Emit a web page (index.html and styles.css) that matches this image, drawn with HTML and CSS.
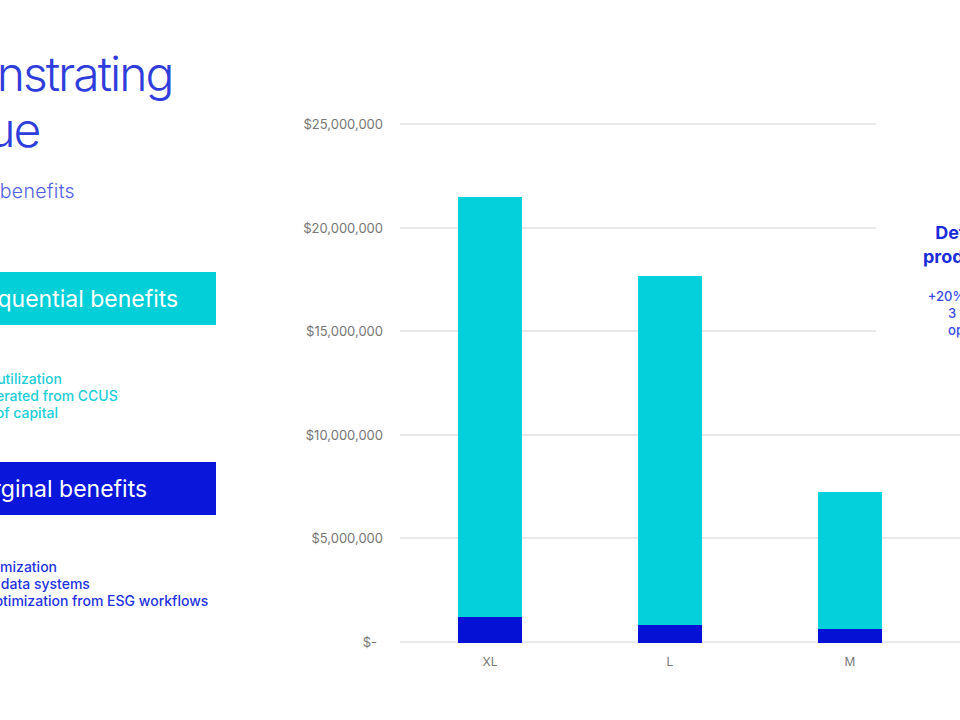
FILE: index.html
```html
<!DOCTYPE html>
<html lang="en">
<head>
<meta charset="utf-8">
<title>Demonstrating revenue</title>
<link rel="stylesheet" href="styles.css">
</head>
<body>
<div class="slide">
  <section class="intro">
    <h1 class="title">Demonstrating<br>revenue</h1>
    <p class="subtitle">Quantifiable benefits</p>
    <div class="box box-cyan">Consequential benefits</div>
    <ul class="list list-cyan">
      <li>Higher asset utilization</li>
      <li>Revenue generated from CCUS</li>
      <li>Reduce cost of capital</li>
    </ul>
    <div class="box box-blue">Marginal benefits</div>
    <ul class="list list-blue">
      <li>Process optimization</li>
      <li>Streamlined data systems</li>
      <li>Reporting optimization from ESG workflows</li>
    </ul>
  </section>

  <section class="chart">
    <div class="yaxis">
      <span>$25,000,000</span>
      <span>$20,000,000</span>
      <span>$15,000,000</span>
      <span>$10,000,000</span>
      <span>$5,000,000</span>
      <span class="zero">$-</span>
    </div>
    <div class="plot-wrap">
      <div class="plot">
        <div class="col">
          <div class="bar">
            <div class="seg seg-cyan" style="height:420px"></div>
            <div class="seg seg-blue" style="height:26px"></div>
          </div>
        </div>
        <div class="col">
          <div class="bar">
            <div class="seg seg-cyan" style="height:349px"></div>
            <div class="seg seg-blue" style="height:18px"></div>
          </div>
        </div>
        <div class="col">
          <div class="bar">
            <div class="seg seg-cyan" style="height:137px"></div>
            <div class="seg seg-blue" style="height:14px"></div>
          </div>
        </div>
        <div class="col"></div>
      </div>
      <div class="xaxis">
        <span>XL</span>
        <span>L</span>
        <span>M</span>
        <span></span>
      </div>
    </div>
  </section>

  <aside class="callout">
    <h2 class="callout-head"><span class="head-line head-first">Deferred</span><span class="head-line">production</span></h2>
    <p class="callout-text">+20% volume<br>3 years<br>optimal</p>
  </aside>
</div>
</body>
</html>
```

FILE: styles.css
```css
html, body {
  margin: 0;
  padding: 0;
  background: #ffffff;
}

body {
  width: 960px;
  height: 720px;
  overflow: hidden;
  font-family: Inter, "Noto Sans", "Liberation Sans", sans-serif;
}

.slide {
  position: relative;
  display: flex;
  width: 960px;
  height: 720px;
  overflow: hidden;
}

/* ---------- left intro column ---------- */
.intro {
  flex: none;
  width: 326px;
  min-width: 0;
  margin-left: -110px;
  padding-top: 46px;
  display: flex;
  flex-direction: column;
}

.title {
  margin: 0 0 0 -18px;
  font-size: 48px;
  line-height: 56px;
  font-weight: 300;
  letter-spacing: -2px;
  color: #2f3edb;
  white-space: nowrap;
}

.subtitle {
  margin: 21px 0 0 -8px;
  font-size: 19.5px;
  line-height: 24px;
  font-weight: 300;
  letter-spacing: 0.3px;
  color: #5261e6;
  white-space: nowrap;
}

.box {
  height: 53px;
  display: flex;
  align-items: center;
  justify-content: center;
  font-size: 23px;
  font-weight: 400;
  color: #ffffff;
  white-space: nowrap;
}

.box-cyan {
  margin-top: 69px;
  background: #02cfd8;
}

.box-blue {
  margin-top: 41px;
  background: #0a16d9;
}

.list {
  margin: 0;
  list-style: none;
  font-size: 14px;
  line-height: 17px;
  font-weight: 500;
  white-space: nowrap;
}

.list-cyan {
  margin-top: 45px;
  padding: 0 0 0 19px;
  color: #22cdd8;
}

.list-blue {
  margin-top: 43px;
  padding: 0 0 0 27px;
  color: #2333e0;
}

/* ---------- chart ---------- */
.chart {
  flex: none;
  display: flex;
  gap: 17px;
  margin-left: 67px;
  padding-top: 123px;
}

.yaxis {
  width: 100px;
  height: 520px;
  display: flex;
  flex-direction: column;
  justify-content: space-between;
  align-items: flex-end;
  font-size: 13px;
  color: #767676;
}

.yaxis span {
  display: block;
  height: 2px;
  line-height: 2px;
  white-space: nowrap;
}

.yaxis .zero {
  padding-right: 6px;
}

.plot {
  width: 720px;
  height: 520px;
  display: grid;
  grid-template-columns: repeat(4, 180px);
  background-image: repeating-linear-gradient(
    to bottom,
    #e9e9e9 0,
    #e9e9e9 2px,
    transparent 2px,
    transparent 103.6px
  );
}

.col {
  display: flex;
  justify-content: center;
  align-items: flex-end;
}

.bar {
  width: 64px;
  display: flex;
  flex-direction: column;
}

.seg-cyan {
  background: #03d0da;
}

.seg-blue {
  background: #0611d6;
}

.xaxis {
  display: grid;
  grid-template-columns: repeat(4, 180px);
  margin-top: 12px;
  font-size: 12px;
  line-height: 14px;
  color: #777777;
  text-align: center;
}

/* ---------- callout over the chart ---------- */
.callout {
  position: absolute;
  left: 876px;
  top: 100px;
  width: 190px;
  height: 320px;
  box-sizing: border-box;
  padding-top: 121px;
  background: #ffffff;
  text-align: center;
}

.callout-head {
  margin: 0;
  font-size: 18px;
  line-height: 24px;
  font-weight: 700;
  color: #1a2bd8;
}

.head-line {
  display: block;
}

.head-first {
  padding-left: 6px;
}

.callout-text {
  margin: 19px 0 0;
  font-size: 13px;
  line-height: 17px;
  font-weight: 500;
  color: #3a4be4;
}
```
